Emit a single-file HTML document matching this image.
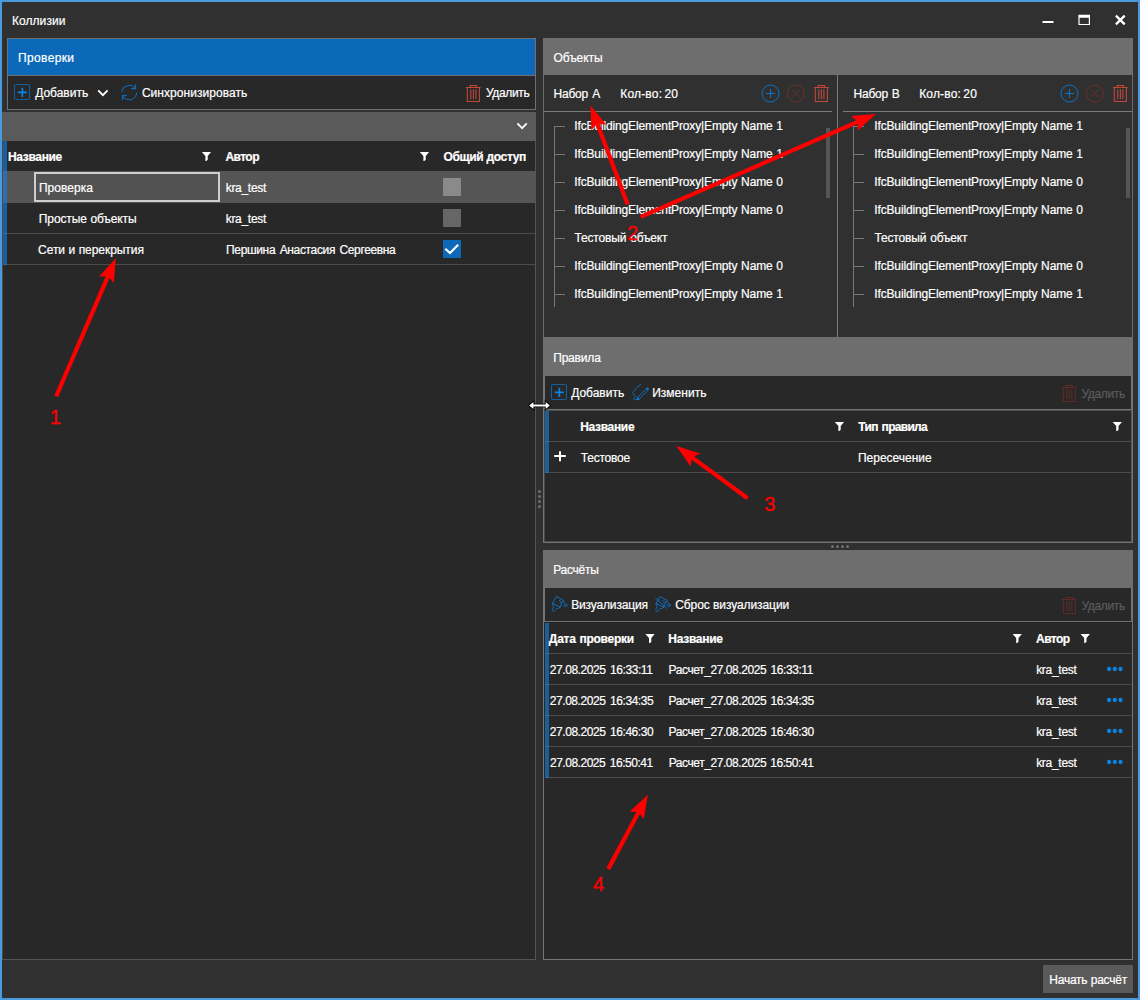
<!DOCTYPE html>
<html lang="ru">
<head>
<meta charset="utf-8">
<title>Коллизии</title>
<style>
*{box-sizing:border-box;margin:0;padding:0}
html,body{width:1140px;height:1000px;overflow:hidden;background:#303030}
body{position:relative;font-family:"Liberation Sans",sans-serif;font-size:12px;color:#fff}
.a{position:absolute}
.t{position:absolute;height:20px;line-height:20px;white-space:pre;color:#fff;-webkit-text-stroke:0.2px currentColor}
.r{position:absolute;font-family:"Liberation Sans",sans-serif;color:#f00;white-space:nowrap;-webkit-text-stroke:0.3px #f00}
svg{position:absolute;overflow:visible}
.hl{position:absolute;height:1px;background:#4b4b4b}
.hdr{position:absolute;background:#6e6e6e}
.stripe{position:absolute;width:4px;background:#1c5e9a}
.sl{position:absolute;height:1px;width:4px;background:#2d6ca5}
.cb{position:absolute;width:18px;height:18px}
</style>
</head>
<body>
<!-- window frame -->
<div class="a" id="frame" style="left:0;top:0;width:1140px;height:1000px;border:2px solid #4a9bde"></div>

<!-- window buttons -->
<svg id="wbtn" style="left:1036px;top:10px" width="96" height="20" viewBox="1036 10 96 20">
  <rect x="1042.5" y="21" width="11" height="2" fill="#fff"/>
  <path fill-rule="evenodd" d="M1078.4 14.7 H1090 V25 H1078.4 Z M1079.6 17.8 V23.9 H1088.8 V17.8 Z" fill="#fff"/>
  <path d="M1115.9 15.6 L1124.7 24.4 M1124.7 15.6 L1115.9 24.4" stroke="#fff" stroke-width="2.3" stroke-linecap="butt" fill="none"/>
</svg>

<!-- ================= LEFT PANEL ================= -->
<div class="a" id="lhead" style="left:7px;top:38px;width:529px;height:38px;background:#0c68b8;border:1px solid #707070"></div>
<div class="a" id="ltool" style="left:7px;top:75px;width:529px;height:35px;background:#282828;border:1px solid #707070"></div>
<div class="a" id="lband" style="left:2px;top:112px;width:534px;height:29px;background:#5a5a5a"></div>
<div class="a" id="lgrid" style="left:2px;top:141px;width:534px;height:819px;background:#282828;border:1px solid #555;border-top:0;border-left:1px solid #4a4a4a"></div>
<div class="a" id="lsel" style="left:7px;top:171px;width:528px;height:32px;background:#555"></div>
<div class="stripe" style="left:3px;top:141px;height:124px"></div>
<div class="stripe" style="left:3px;top:171px;height:32px;background:#2f6fa8"></div>
<div class="hl" style="left:7px;top:233px;width:528px"></div><div class="sl" style="left:3px;top:233px"></div>
<div class="hl" style="left:7px;top:264px;width:528px"></div><div class="sl" style="left:3px;top:264px"></div>
<div class="a" id="edit" style="left:34px;top:172px;width:186px;height:30px;border:2px solid #cecece;background:#525252"></div>
<div class="cb" style="left:443px;top:178px;background:#8a8a8a"></div>
<div class="cb" style="left:443px;top:209px;background:#666"></div>
<div class="cb" style="left:443px;top:240px;background:#0c68b8"></div>
<svg style="left:443px;top:240px" width="18" height="18" viewBox="0 0 18 18"><path d="M2.3 8.7 L7 13 L15.2 4.8" fill="none" stroke="#fff" stroke-width="2.1"/></svg>

<!-- ================= RIGHT: OBJECTS ================= -->
<div class="hdr" style="left:543px;top:38px;width:590px;height:37px"></div>
<div class="a" id="obody" style="left:543px;top:75px;width:590px;height:262px;background:#303030;border-left:1px solid #6c6c6c;border-right:1px solid #6c6c6c"></div>
<div class="a" style="left:544px;top:111px;width:288px;height:1px;background:#7a7a7a"></div>
<div class="a" style="left:843px;top:111px;width:289px;height:1px;background:#7a7a7a"></div>
<div class="a" style="left:837px;top:75px;width:1px;height:262px;background:#7a7a7a"></div>
<div class="a" style="left:826px;top:128px;width:4px;height:70px;background:#555"></div>
<div class="a" style="left:1126px;top:128px;width:4px;height:70px;background:#555"></div>
<div class="a" style="left:554px;top:126px;width:1px;height:181px;background:#787878"></div>
<div class="a" style="left:554px;top:126px;width:11px;height:1px;background:#787878"></div>
<div class="a" style="left:554px;top:154px;width:11px;height:1px;background:#787878"></div>
<div class="a" style="left:554px;top:182px;width:11px;height:1px;background:#787878"></div>
<div class="a" style="left:554px;top:210px;width:11px;height:1px;background:#787878"></div>
<div class="a" style="left:554px;top:238px;width:11px;height:1px;background:#787878"></div>
<div class="a" style="left:554px;top:266px;width:11px;height:1px;background:#787878"></div>
<div class="a" style="left:554px;top:294px;width:11px;height:1px;background:#787878"></div>
<div class="a" style="left:853px;top:126px;width:1px;height:181px;background:#787878"></div>
<div class="a" style="left:853px;top:126px;width:11px;height:1px;background:#787878"></div>
<div class="a" style="left:853px;top:154px;width:11px;height:1px;background:#787878"></div>
<div class="a" style="left:853px;top:182px;width:11px;height:1px;background:#787878"></div>
<div class="a" style="left:853px;top:210px;width:11px;height:1px;background:#787878"></div>
<div class="a" style="left:853px;top:238px;width:11px;height:1px;background:#787878"></div>
<div class="a" style="left:853px;top:266px;width:11px;height:1px;background:#787878"></div>
<div class="a" style="left:853px;top:294px;width:11px;height:1px;background:#787878"></div>

<!-- ================= RIGHT: RULES ================= -->
<div class="hdr" style="left:543px;top:337px;width:590px;height:39px"></div>
<div class="a" id="rtool" style="left:543px;top:376px;width:590px;height:33px;background:#282828;border-left:2px solid #737373;border-right:2px solid #737373"></div>
<div class="a" id="rgrid" style="left:543px;top:409px;width:590px;height:134px;background:#282828;border:1px solid #737373"></div>
<div class="a" style="left:544px;top:410px;width:588px;height:1px;background:#4c4c4c"></div>
<div class="a" style="left:544px;top:411px;width:1px;height:130px;background:#464646"></div>
<div class="a" style="left:1131px;top:411px;width:1px;height:130px;background:#5c5c5c"></div>
<div class="a" style="left:544px;top:541px;width:588px;height:1px;background:#4a4a4a"></div>
<div class="stripe" style="left:545px;top:411px;height:62px"></div>
<div class="hl" style="left:549px;top:441px;width:582px"></div><div class="sl" style="left:545px;top:441px"></div>
<div class="hl" style="left:549px;top:472px;width:582px"></div><div class="sl" style="left:545px;top:472px"></div>

<!-- ================= RIGHT: CALCS ================= -->
<div class="hdr" style="left:543px;top:550px;width:590px;height:38px"></div>
<div class="a" id="ctool" style="left:543px;top:588px;width:590px;height:33px;background:#282828;border-left:2px solid #737373;border-right:2px solid #737373"></div>
<div class="a" id="cgrid" style="left:543px;top:621px;width:590px;height:339px;background:#282828;border:1px solid #737373"></div>
<div class="a" style="left:544px;top:622px;width:588px;height:1px;background:#232323"></div>
<div class="stripe" style="left:545px;top:623px;height:155px"></div>
<div class="hl" style="left:549px;top:653px;width:583px"></div><div class="sl" style="left:545px;top:653px"></div>
<div class="hl" style="left:549px;top:684px;width:583px"></div><div class="sl" style="left:545px;top:684px"></div>
<div class="hl" style="left:549px;top:715px;width:583px"></div><div class="sl" style="left:545px;top:715px"></div>
<div class="hl" style="left:549px;top:746px;width:583px"></div><div class="sl" style="left:545px;top:746px"></div>
<div class="hl" style="left:549px;top:777px;width:583px"></div><div class="sl" style="left:545px;top:777px"></div>

<!-- button -->
<div class="a" id="btn" style="left:1043px;top:965px;width:90px;height:28px;background:#5a5a5a"></div>

<svg style="left:14px;top:84px" width="16" height="16" viewBox="0 0 16 16"><rect x="0.5" y="0.5" width="15" height="15" rx="1.6" fill="none" stroke="#10609f" stroke-width="1.1"/><path d="M3.8 8.35H12.8M8.35 3.8V12.9" stroke="#0a84e4" stroke-width="1.7" fill="none"/></svg>
<svg style="left:551px;top:384px" width="16" height="16" viewBox="0 0 16 16"><rect x="0.5" y="0.5" width="15" height="15" rx="1.6" fill="none" stroke="#10609f" stroke-width="1.1"/><path d="M3.8 8.35H12.8M8.35 3.8V12.9" stroke="#0a84e4" stroke-width="1.7" fill="none"/></svg>
<svg style="left:97px;top:89px" width="12" height="8" viewBox="0 0 12 8"><g transform="translate(0.6 0.6)"><path d="M0.6 0.7 L5.3 5.5 L10 0.7" fill="none" stroke="#fff" stroke-width="1.8"/></g></svg>
<svg style="left:516px;top:122px" width="12" height="8" viewBox="0 0 12 8"><g transform="translate(0.8 0.6)"><path d="M0.6 0.7 L5.3 5.5 L10 0.7" fill="none" stroke="#fff" stroke-width="1.8"/></g></svg>
<svg style="left:121px;top:84px" width="17" height="17" viewBox="0 0 17 17"><g fill="none" stroke="#0e6dbb" stroke-width="1.05"><path d="M1.0 8.3 A7.3 7.0 0 0 1 14.5 4.7"/><path d="M15.6 8.5 A7.3 7.0 0 0 1 1.6 11.5"/><path d="M14.6 0.3 V4.6 H10.3"/><path d="M1.45 15.9 V11.45 H5.9"/></g></svg>
<svg style="left:466px;top:85px" width="15" height="17" viewBox="0 0 15 17"><g fill="none" stroke="#c2483a" stroke-width="1.05"><path d="M0 2.5 H14.6"/><path d="M4.2 2.5 V0.5 H10.4 V2.5"/><path d="M1.3 2.5 V16.5 H13.4 V2.5"/><path d="M4.8 4.3 V14.2 M7.4 4.3 V14.2 M9.9 4.3 V14.2"/></g></svg>
<svg style="left:814px;top:85px" width="15" height="17" viewBox="0 0 15 17"><g fill="none" stroke="#c2483a" stroke-width="1.05"><path d="M0 2.5 H14.6"/><path d="M4.2 2.5 V0.5 H10.4 V2.5"/><path d="M1.3 2.5 V16.5 H13.4 V2.5"/><path d="M4.8 4.3 V14.2 M7.4 4.3 V14.2 M9.9 4.3 V14.2"/></g></svg>
<svg style="left:1113px;top:85px" width="15" height="17" viewBox="0 0 15 17"><g fill="none" stroke="#c2483a" stroke-width="1.05"><path d="M0 2.5 H14.6"/><path d="M4.2 2.5 V0.5 H10.4 V2.5"/><path d="M1.3 2.5 V16.5 H13.4 V2.5"/><path d="M4.8 4.3 V14.2 M7.4 4.3 V14.2 M9.9 4.3 V14.2"/></g></svg>
<svg style="left:1062px;top:385px" width="15" height="17" viewBox="0 0 15 17"><g fill="none" stroke="#5e2b27" stroke-width="1.05"><path d="M0 2.5 H14.6"/><path d="M4.2 2.5 V0.5 H10.4 V2.5"/><path d="M1.3 2.5 V16.5 H13.4 V2.5"/><path d="M4.8 4.3 V14.2 M7.4 4.3 V14.2 M9.9 4.3 V14.2"/></g></svg>
<svg style="left:1062px;top:597px" width="15" height="17" viewBox="0 0 15 17"><g fill="none" stroke="#5e2b27" stroke-width="1.05"><path d="M0 2.5 H14.6"/><path d="M4.2 2.5 V0.5 H10.4 V2.5"/><path d="M1.3 2.5 V16.5 H13.4 V2.5"/><path d="M4.8 4.3 V14.2 M7.4 4.3 V14.2 M9.9 4.3 V14.2"/></g></svg>
<svg style="left:760px;top:83px" width="21" height="21" viewBox="0 0 21 21"><g transform="translate(0.5 0.5)"><g fill="none" stroke="#0e74c8" stroke-width="1"><circle cx="10" cy="10" r="8.5"/><path d="M5.5 10 H14.5 M10 5.5 V14.5"/></g></g></svg>
<svg style="left:1059px;top:83px" width="21" height="21" viewBox="0 0 21 21"><g transform="translate(0.5 0.5)"><g fill="none" stroke="#0e74c8" stroke-width="1"><circle cx="10" cy="10" r="8.5"/><path d="M5.5 10 H14.5 M10 5.5 V14.5"/></g></g></svg>
<svg style="left:785px;top:83px" width="21" height="21" viewBox="0 0 21 21"><g transform="translate(0.7 0.6)"><g fill="none" stroke="#6b3129" stroke-width="1"><circle cx="10" cy="10" r="8.5"/><path d="M6.3 6.3 L13.7 13.7 M13.7 6.3 L6.3 13.7"/></g></g></svg>
<svg style="left:1084px;top:83px" width="21" height="21" viewBox="0 0 21 21"><g transform="translate(0.7 0.6)"><g fill="none" stroke="#6b3129" stroke-width="1"><circle cx="10" cy="10" r="8.5"/><path d="M6.3 6.3 L13.7 13.7 M13.7 6.3 L6.3 13.7"/></g></g></svg>
<svg style="left:201px;top:151px" width="11" height="11" viewBox="0 0 11 11"><g transform="translate(0.8 0.8)"><path d="M0 0.2 H9.3 L5.9 4.3 V8.0 L4.6 9.3 H3.6 V4.3 Z" fill="#fff"/></g></svg>
<svg style="left:419px;top:151px" width="11" height="11" viewBox="0 0 11 11"><g transform="translate(0.8 0.8)"><path d="M0 0.2 H9.3 L5.9 4.3 V8.0 L4.6 9.3 H3.6 V4.3 Z" fill="#fff"/></g></svg>
<svg style="left:834px;top:421px" width="11" height="11" viewBox="0 0 11 11"><g transform="translate(0.8 0.8)"><path d="M0 0.2 H9.3 L5.9 4.3 V8.0 L4.6 9.3 H3.6 V4.3 Z" fill="#fff"/></g></svg>
<svg style="left:1112px;top:421px" width="11" height="11" viewBox="0 0 11 11"><g transform="translate(0.6 0.8)"><path d="M0 0.2 H9.3 L5.9 4.3 V8.0 L4.6 9.3 H3.6 V4.3 Z" fill="#fff"/></g></svg>
<svg style="left:645px;top:633px" width="11" height="11" viewBox="0 0 11 11"><g transform="translate(0.4 0.8)"><path d="M0 0.2 H9.3 L5.9 4.3 V8.0 L4.6 9.3 H3.6 V4.3 Z" fill="#fff"/></g></svg>
<svg style="left:1012px;top:633px" width="11" height="11" viewBox="0 0 11 11"><g transform="translate(0.6 0.8)"><path d="M0 0.2 H9.3 L5.9 4.3 V8.0 L4.6 9.3 H3.6 V4.3 Z" fill="#fff"/></g></svg>
<svg style="left:1080px;top:633px" width="11" height="11" viewBox="0 0 11 11"><g transform="translate(0.6 0.8)"><path d="M0 0.2 H9.3 L5.9 4.3 V8.0 L4.6 9.3 H3.6 V4.3 Z" fill="#fff"/></g></svg>
<svg style="left:632px;top:384px" width="18" height="17" viewBox="0 0 18 17"><g fill="none" stroke="#0e6fbf" stroke-width="1" stroke-linecap="round" stroke-linejoin="round"><path d="M8.6 0.6 C6.5 1.9 3.6 4.6 2.0 6.9 C1.2 8.0 0.5 8.7 0.7 9.2 C1.0 10.0 3.4 11.2 3.6 12.1 C3.7 12.9 1.5 13.9 1.5 14.6 C1.5 15.5 3.0 15.7 4.6 15.7"/><path d="M5.7 13.3 L14.4 4.6 M6.9 15.3 L15.9 6.3"/><path d="M5.3 13.2 L4.9 15.7 L7.0 15.5 Z" fill="#0a84e4" stroke="#0a84e4" stroke-width="0.6"/><path d="M14.5 4.4 L15.4 3.7 L16.7 5.2 L15.9 6.2 Z" fill="#0a84e4" stroke="#0a84e4" stroke-width="0.6"/></g></svg>
<svg style="left:551px;top:596px" width="17" height="17" viewBox="0 0 17 17"><g fill="none" stroke="#0e6fbf" stroke-width="1" stroke-linejoin="round" stroke-linecap="round"><path d="M1.4 7.4 L5.5 0.4 L12.4 4.4 L13.0 6.3"/><path d="M11.6 5.0 L9.1 11.1"/><path d="M1.4 7.4 L9.1 11.1"/><path d="M8.0 4.2 L8.7 4.9 M9.6 5.6 L9.2 6.8"/><path d="M1.4 7.4 C0.6 8.6 2.6 9.6 2.5 10.7 C2.4 11.6 1.3 12.4 1.2 13.6 C1.1 14.8 1.7 15.6 2.6 15.5 C3.9 15.4 4.2 13.8 4.8 13.0 C5.4 12.2 6.6 12.6 7.6 12.3 C8.3 12.1 8.8 11.6 9.1 11.1"/><circle cx="14.4" cy="9.1" r="1.45"/></g></svg>
<svg style="left:654px;top:596px" width="18" height="18" viewBox="0 0 18 18"><g transform="translate(0.6 0)"><g fill="none" stroke="#0e6fbf" stroke-width="1" stroke-linejoin="round" stroke-linecap="round"><path d="M1.4 7.4 L5.5 0.4 L12.4 4.4 L13.0 6.3"/><path d="M11.6 5.0 L9.1 11.1"/><path d="M1.4 7.4 L9.1 11.1"/><path d="M8.0 4.2 L8.7 4.9 M9.6 5.6 L9.2 6.8"/><path d="M1.4 7.4 C0.6 8.6 2.6 9.6 2.5 10.7 C2.4 11.6 1.3 12.4 1.2 13.6 C1.1 14.8 1.7 15.6 2.6 15.5 C3.9 15.4 4.2 13.8 4.8 13.0 C5.4 12.2 6.6 12.6 7.6 12.3 C8.3 12.1 8.8 11.6 9.1 11.1"/><circle cx="14.4" cy="9.1" r="1.45"/><path d="M1.0 2.0 L12.3 12.5"/></g></g></svg>
<svg style="left:554px;top:451px" width="12" height="12" viewBox="0 0 12 12"><path d="M0.2 5 H11.8 M6 0.2 V10.2" stroke="#fff" stroke-width="2" fill="none"/></svg>
<svg style="left:1106px;top:666px" width="17" height="6" viewBox="0 0 17 6"><g transform="translate(0.8 0.5)"><circle cx="2.30" cy="2.5" r="2.15" fill="#0a84e4"/><circle cx="8.00" cy="2.5" r="2.15" fill="#0a84e4"/><circle cx="13.70" cy="2.5" r="2.15" fill="#0a84e4"/></g></svg>
<svg style="left:1106px;top:697px" width="17" height="6" viewBox="0 0 17 6"><g transform="translate(0.8 0.5)"><circle cx="2.30" cy="2.5" r="2.15" fill="#0a84e4"/><circle cx="8.00" cy="2.5" r="2.15" fill="#0a84e4"/><circle cx="13.70" cy="2.5" r="2.15" fill="#0a84e4"/></g></svg>
<svg style="left:1106px;top:728px" width="17" height="6" viewBox="0 0 17 6"><g transform="translate(0.8 0.5)"><circle cx="2.30" cy="2.5" r="2.15" fill="#0a84e4"/><circle cx="8.00" cy="2.5" r="2.15" fill="#0a84e4"/><circle cx="13.70" cy="2.5" r="2.15" fill="#0a84e4"/></g></svg>
<svg style="left:1106px;top:759px" width="17" height="6" viewBox="0 0 17 6"><g transform="translate(0.8 0.5)"><circle cx="2.30" cy="2.5" r="2.15" fill="#0a84e4"/><circle cx="8.00" cy="2.5" r="2.15" fill="#0a84e4"/><circle cx="13.70" cy="2.5" r="2.15" fill="#0a84e4"/></g></svg>
<svg style="left:537px;top:490px" width="5" height="19" viewBox="0 0 5 19"><g transform="translate(0.5 0)"><circle cx="2" cy="1.5" r="1.5" fill="#6e6e6e"/><circle cx="2" cy="6.5" r="1.5" fill="#6e6e6e"/><circle cx="2" cy="11.5" r="1.5" fill="#6e6e6e"/><circle cx="2" cy="16.5" r="1.5" fill="#6e6e6e"/></g></svg>
<svg style="left:831px;top:544px" width="19" height="5" viewBox="0 0 19 5"><g transform="translate(0 0.6)"><circle cx="1.5" cy="2" r="1.5" fill="#6e6e6e"/><circle cx="6.5" cy="2" r="1.5" fill="#6e6e6e"/><circle cx="11.5" cy="2" r="1.5" fill="#6e6e6e"/><circle cx="16.5" cy="2" r="1.5" fill="#6e6e6e"/></g></svg>

<div class="t" style="left:11.88px;top:11px;letter-spacing:0.079px;">Коллизии</div>
<div class="t" style="left:18.09px;top:48px;letter-spacing:0.335px;">Проверки</div>
<div class="t" style="left:35.19px;top:83px;letter-spacing:-0.010px;">Добавить</div>
<div class="t" style="left:141.89px;top:83px;letter-spacing:0.046px;">Синхронизировать</div>
<div class="t" style="left:485.90px;top:83px;letter-spacing:-0.342px;">Удалить</div>
<div class="t" style="left:8.03px;top:147px;letter-spacing:-0.339px;font-weight:bold;">Название</div>
<div class="t" style="left:225.46px;top:147px;letter-spacing:-0.564px;font-weight:bold;">Автор</div>
<div class="t" style="left:443.58px;top:147px;letter-spacing:-0.400px;word-spacing:0.475px;font-weight:bold;">Общий доступ</div>
<div class="t" style="left:38.99px;top:178px;letter-spacing:0.015px;">Проверка</div>
<div class="t" style="left:225.73px;top:178px;letter-spacing:-0.300px;">kra_test</div>
<div class="t" style="left:38.87px;top:209px;letter-spacing:-0.128px;word-spacing:0.527px;">Простые объекты</div>
<div class="t" style="left:225.73px;top:209px;letter-spacing:-0.300px;">kra_test</div>
<div class="t" style="left:38.10px;top:240px;letter-spacing:-0.062px;word-spacing:0.250px;">Сети и перекрытия</div>
<div class="t" style="left:226.08px;top:240px;letter-spacing:-0.352px;word-spacing:1.454px;">Першина Анастасия Сергеевна</div>
<div class="t" style="left:553.54px;top:48px;letter-spacing:-0.086px;">Объекты</div>
<div class="t" style="left:553.58px;top:84px;letter-spacing:-0.259px;word-spacing:1.415px;">Набор A</div>
<div class="t" style="left:620.23px;top:84px;letter-spacing:0.188px;word-spacing:-1.261px;">Кол-во: 20</div>
<div class="t" style="left:853.58px;top:84px;letter-spacing:-0.259px;word-spacing:0.858px;">Набор B</div>
<div class="t" style="left:919.13px;top:84px;letter-spacing:0.188px;word-spacing:-1.261px;">Кол-во: 20</div>
<div class="t" style="left:574.26px;top:116px;letter-spacing:-0.141px;word-spacing:0.536px;">IfcBuildingElementProxy|Empty Name 1</div>
<div class="t" style="left:874.26px;top:116px;letter-spacing:-0.141px;word-spacing:0.536px;">IfcBuildingElementProxy|Empty Name 1</div>
<div class="t" style="left:574.26px;top:144px;letter-spacing:-0.141px;word-spacing:0.536px;">IfcBuildingElementProxy|Empty Name 1</div>
<div class="t" style="left:874.26px;top:144px;letter-spacing:-0.141px;word-spacing:0.536px;">IfcBuildingElementProxy|Empty Name 1</div>
<div class="t" style="left:574.26px;top:172px;letter-spacing:-0.141px;word-spacing:0.563px;">IfcBuildingElementProxy|Empty Name 0</div>
<div class="t" style="left:874.26px;top:172px;letter-spacing:-0.141px;word-spacing:0.563px;">IfcBuildingElementProxy|Empty Name 0</div>
<div class="t" style="left:574.26px;top:200px;letter-spacing:-0.141px;word-spacing:0.563px;">IfcBuildingElementProxy|Empty Name 0</div>
<div class="t" style="left:874.26px;top:200px;letter-spacing:-0.141px;word-spacing:0.563px;">IfcBuildingElementProxy|Empty Name 0</div>
<div class="t" style="left:574.43px;top:228px;letter-spacing:-0.163px;word-spacing:0.816px;">Тестовый объект</div>
<div class="t" style="left:874.43px;top:228px;letter-spacing:-0.163px;word-spacing:0.816px;">Тестовый объект</div>
<div class="t" style="left:574.26px;top:256px;letter-spacing:-0.141px;word-spacing:0.563px;">IfcBuildingElementProxy|Empty Name 0</div>
<div class="t" style="left:874.26px;top:256px;letter-spacing:-0.141px;word-spacing:0.563px;">IfcBuildingElementProxy|Empty Name 0</div>
<div class="t" style="left:574.26px;top:284px;letter-spacing:-0.141px;word-spacing:0.536px;">IfcBuildingElementProxy|Empty Name 1</div>
<div class="t" style="left:874.26px;top:284px;letter-spacing:-0.141px;word-spacing:0.536px;">IfcBuildingElementProxy|Empty Name 1</div>
<div class="t" style="left:553.19px;top:348px;letter-spacing:-0.183px;">Правила</div>
<div class="t" style="left:571.19px;top:383px;letter-spacing:-0.010px;">Добавить</div>
<div class="t" style="left:652.18px;top:383px;letter-spacing:0.019px;">Изменить</div>
<div class="t" style="left:1081.50px;top:384px;letter-spacing:-0.358px;color:#5c5c5c;">Удалить</div>
<div class="t" style="left:580.13px;top:417px;letter-spacing:-0.311px;font-weight:bold;">Название</div>
<div class="t" style="left:858.30px;top:417px;letter-spacing:-0.699px;word-spacing:1.257px;font-weight:bold;">Тип правила</div>
<div class="t" style="left:580.75px;top:448px;letter-spacing:-0.221px;">Тестовое</div>
<div class="t" style="left:857.99px;top:448px;letter-spacing:-0.018px;">Пересечение</div>
<div class="t" style="left:553.18px;top:560px;letter-spacing:-0.251px;">Расчёты</div>
<div class="t" style="left:571.18px;top:595px;letter-spacing:-0.154px;">Визуализация</div>
<div class="t" style="left:675.21px;top:595px;letter-spacing:-0.080px;word-spacing:0.034px;">Сброс визуализации</div>
<div class="t" style="left:1081.50px;top:596px;letter-spacing:-0.358px;color:#5c5c5c;">Удалить</div>
<div class="t" style="left:548.87px;top:629px;letter-spacing:-0.247px;word-spacing:0.725px;font-weight:bold;">Дата проверки</div>
<div class="t" style="left:668.33px;top:629px;letter-spacing:-0.282px;font-weight:bold;">Название</div>
<div class="t" style="left:1036.06px;top:629px;letter-spacing:-0.564px;font-weight:bold;">Автор</div>
<div class="t" style="left:549.77px;top:660px;letter-spacing:-0.435px;word-spacing:1.687px;">27.08.2025 16:33:11</div>
<div class="t" style="left:668.49px;top:660px;letter-spacing:-0.415px;word-spacing:1.241px;">Расчет_27.08.2025 16:33:11</div>
<div class="t" style="left:1036.13px;top:660px;letter-spacing:-0.285px;">kra_test</div>
<div class="t" style="left:549.78px;top:691px;letter-spacing:-0.438px;word-spacing:1.689px;">27.08.2025 16:34:35</div>
<div class="t" style="left:668.50px;top:691px;letter-spacing:-0.417px;word-spacing:1.231px;">Расчет_27.08.2025 16:34:35</div>
<div class="t" style="left:1036.13px;top:691px;letter-spacing:-0.285px;">kra_test</div>
<div class="t" style="left:549.80px;top:722px;letter-spacing:-0.442px;word-spacing:1.692px;">27.08.2025 16:46:30</div>
<div class="t" style="left:668.51px;top:722px;letter-spacing:-0.418px;word-spacing:1.218px;">Расчет_27.08.2025 16:46:30</div>
<div class="t" style="left:1036.13px;top:722px;letter-spacing:-0.285px;">kra_test</div>
<div class="t" style="left:549.95px;top:753px;letter-spacing:-0.476px;word-spacing:1.716px;">27.08.2025 16:50:41</div>
<div class="t" style="left:668.63px;top:753px;letter-spacing:-0.433px;word-spacing:1.098px;">Расчет_27.08.2025 16:50:41</div>
<div class="t" style="left:1036.13px;top:753px;letter-spacing:-0.285px;">kra_test</div>
<div class="t" style="left:1049.30px;top:970px;letter-spacing:-0.248px;word-spacing:0.346px;">Начать расчёт</div>

<svg style="left:0;top:0" width="1140" height="1000" viewBox="0 0 1140 1000"><path d="M115.8 258.2 L113.8 282.9 L109.6 277.9 L58.1 397.0 L54.3 395.4 L105.7 276.2 L99.1 276.6 Z M590.5 105.4 L606.2 124.6 L599.7 123.9 L629.6 203.7 L625.6 205.1 L595.7 125.3 L591.3 130.2 Z M875.8 114.0 L857.5 130.7 L857.9 124.1 L641.6 218.7 L640.0 214.9 L856.2 120.3 L851.1 116.1 Z M676.4 446.0 L700.1 453.5 L694.2 456.4 L748.8 496.6 L746.4 500.0 L691.7 459.8 L690.6 466.4 Z M647.8 794.8 L643.8 819.3 L640.0 813.9 L610.2 870.0 L606.4 868.0 L636.3 811.9 L629.7 811.8 Z" fill="#ff0000"/></svg>
<div class="r" style="left:49.79px;top:402.2px;font-size:20px;height:30px;line-height:30px">1</div>
<div class="r" style="left:626.97px;top:218.4px;font-size:20px;height:30px;line-height:30px">2</div>
<div class="r" style="left:764.13px;top:488.6px;font-size:20px;height:30px;line-height:30px">3</div>
<div class="r" style="left:592.96px;top:868.6px;font-size:20px;height:30px;line-height:30px">4</div>
<svg style="left:528px;top:400px" width="24" height="11" viewBox="0 0 24 11"><path d="M1.2 5.5 L5.4 2.0 V4.6 H17.7 V2.0 L21.9 5.5 L17.7 9.0 V6.4 H5.4 V9.0 Z" fill="#fff" stroke="#000" stroke-width="1.9" stroke-linejoin="miter" paint-order="stroke"/></svg>
</body>
</html>
